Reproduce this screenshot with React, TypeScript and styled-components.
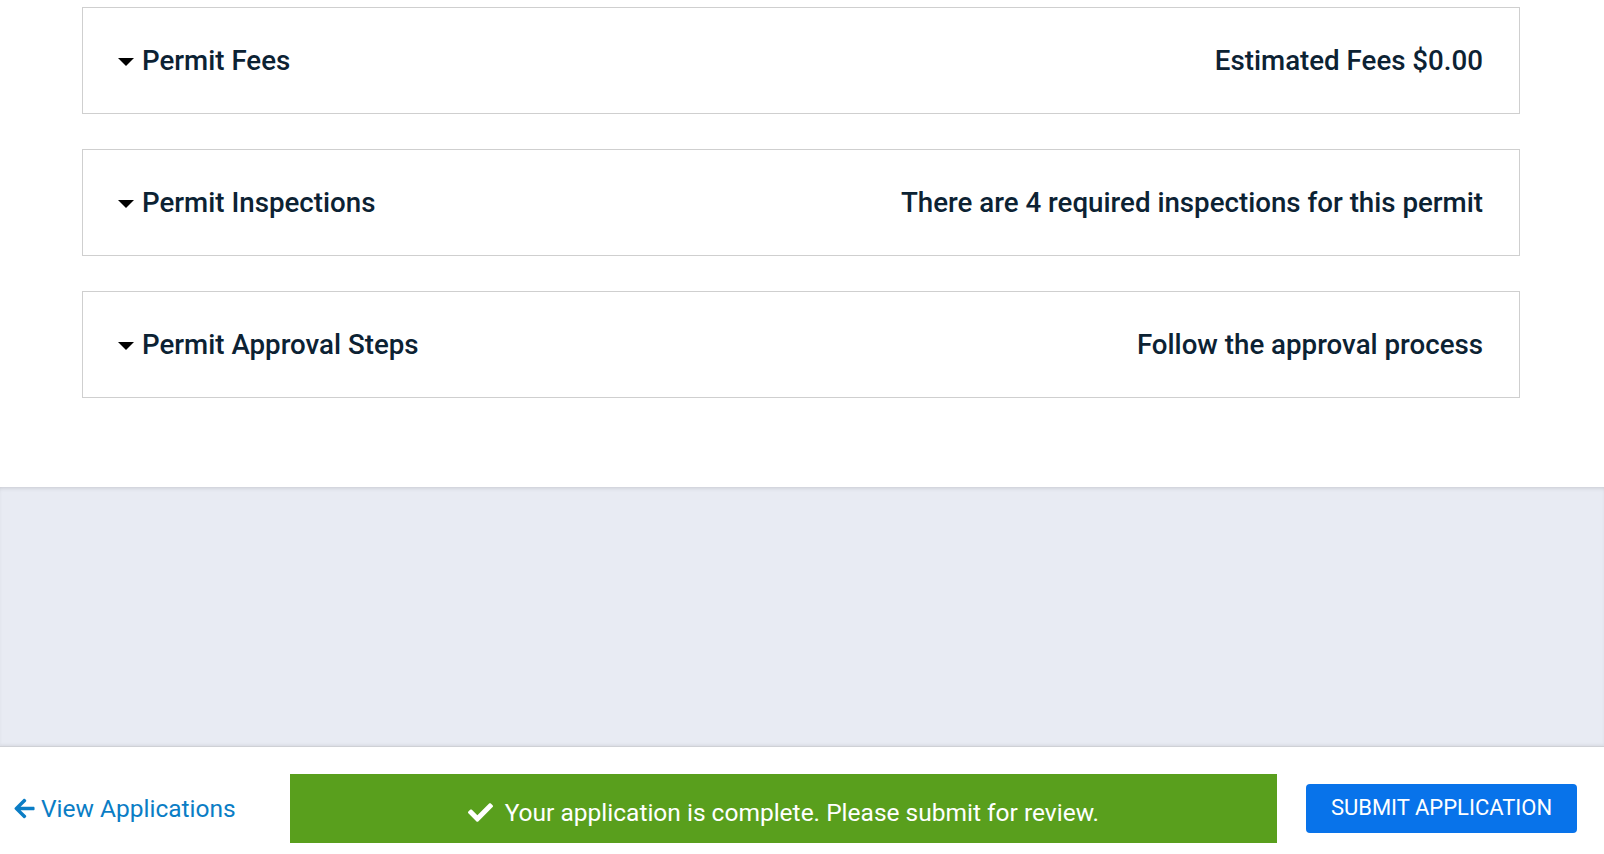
import styled, { createGlobalStyle } from "styled-components";
import { FaArrowLeft, FaCheck } from "react-icons/fa";

const GlobalStyle = createGlobalStyle`
  html, body {
    margin: 0;
    padding: 0;
    background: #fff;
    font-family: Roboto, "Liberation Sans", Arial, sans-serif;
  }
  * {
    box-sizing: border-box;
  }
`;

const Page = styled.div`
  width: 100vw;
  height: 100vh;
  display: flex;
  flex-direction: column;
  overflow: hidden;
`;

const Content = styled.section`
  display: flex;
  flex-direction: column;
  gap: 35px;
  padding: 7px 84px 89px 82px;
  background: #fff;
`;

const Panel = styled.div`
  height: 107px;
  border: 1px solid #cfcfcf;
  background: #fff;
  display: flex;
  align-items: center;
  justify-content: space-between;
  padding: 0 36px 0 35px;
  color: #0c2233;
  font-size: 27.7px;
  font-weight: 500;
`;

const PanelTitle = styled.div`
  display: flex;
  align-items: center;
  gap: 8px;
`;

const Caret = styled.span`
  width: 0;
  height: 0;
  border-left: 8px solid transparent;
  border-right: 8px solid transparent;
  border-top: 8px solid #000;
  margin-top: 2px;
`;

const Summary = styled.div`
  font-weight: 500;
`;

const Backdrop = styled.div`
  flex: 1;
  background: #e8ebf3;
  box-shadow: inset 0 3px 4px -2px rgba(0, 0, 0, 0.15);
`;

const Footer = styled.footer`
  height: 108px;
  flex-shrink: 0;
  display: flex;
  align-items: center;
  padding: 27px 27px 11px 13px;
  background: #fff;
  border-top: 1px solid #cfd1d6;
  box-shadow: 0 -1px 3px rgba(0, 0, 0, 0.08);
`;

const BackLink = styled.a`
  display: flex;
  align-items: center;
  gap: 5px;
  color: #0a7dc5;
  font-size: 24.5px;
  text-decoration: none;
  cursor: pointer;
  white-space: nowrap;
`;

const Notice = styled.div`
  flex: 1;
  height: 69px;
  margin: 0 29px 0 54px;
  background: #599f1d;
  color: #fff;
  display: flex;
  align-items: center;
  justify-content: center;
  gap: 12px;
  font-size: 24.5px;
  padding-top: 8px;
`;

const SubmitButton = styled.button`
  width: 271px;
  height: 49px;
  border: none;
  border-radius: 4px;
  background: #0873ea;
  color: #fff;
  font-family: Roboto, "Liberation Sans", Arial, sans-serif;
  font-size: 22px;
  text-transform: uppercase;
  cursor: pointer;
  padding: 0 0 2px;
`;

const panels = [
  { title: "Permit Fees", summary: "Estimated Fees $0.00" },
  {
    title: "Permit Inspections",
    summary: "There are 4 required inspections for this permit",
  },
  { title: "Permit Approval Steps", summary: "Follow the approval process" },
];

const App = () => {
  return (
    <>
      <GlobalStyle />
      <Page>
        <Content>
          {panels.map((p) => (
            <Panel key={p.title}>
              <PanelTitle>
                <Caret />
                {p.title}
              </PanelTitle>
              <Summary>{p.summary}</Summary>
            </Panel>
          ))}
        </Content>
        <Backdrop />
        <Footer>
          <BackLink>
            <FaArrowLeft size={23} />
            View Applications
          </BackLink>
          <Notice>
            <FaCheck size={25} />
            Your application is complete. Please submit for review.
          </Notice>
          <SubmitButton>Submit Application</SubmitButton>
        </Footer>
      </Page>
    </>
  );
};

export default App;
